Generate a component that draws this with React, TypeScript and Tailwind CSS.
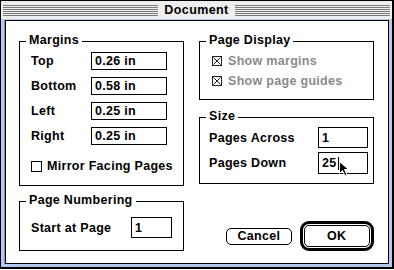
import React from 'react';

const font = { fontFamily: '"Liberation Sans", Arial, sans-serif' };

const stripes =
  'bg-[repeating-linear-gradient(to_bottom,#7a7a7a_0px,#7a7a7a_1px,#eeeeee_1px,#eeeeee_2px)]';

function GroupBox({
  title,
  className,
  children,
}: {
  title: string;
  className: string;
  children: React.ReactNode;
}) {
  return (
    <div className={`relative border border-black ${className}`}>
      <span className="absolute left-[6px] -top-[9px] bg-white px-[3px] text-[12.5px] font-bold leading-[14px] tracking-[0.3px] text-black">
        {title}
      </span>
      {children}
    </div>
  );
}

function Field({ value, className, caret }: { value: string; className: string; caret?: boolean }) {
  return (
    <div className={`flex items-center border border-black pl-[3px] text-[12.5px] font-bold leading-[14px] ${className}`}>
      <span>{value}</span>
      {caret && <span className="ml-[1px] h-[13px] w-[1px] bg-black" />}
    </div>
  );
}

function XBox() {
  return (
    <svg width="10" height="10" viewBox="0 0 10 10" className="shrink-0">
      <rect x="0.5" y="0.5" width="9" height="9" fill="white" stroke="#222" />
      <path d="M1.5 1.5 L8.5 8.5 M8.5 1.5 L1.5 8.5" stroke="#222" strokeWidth="1" />
    </svg>
  );
}

function Cursor() {
  return (
    <svg width="11" height="16" viewBox="0 0 11 16" className="absolute left-[21px] top-[9px]">
      <path
        d="M0.5 0.5 L0.5 12.5 L3.5 9.5 L6 15 L8 14 L5.5 8.5 L9.5 8.5 Z"
        fill="black"
        stroke="white"
        strokeWidth="1"
      />
    </svg>
  );
}

export default function App() {
  return (
    <div className="h-[270px] w-[394px] bg-white" style={font}>
      <div className="flex h-[269px] w-[394px] flex-col border-b-2 border-l border-r-2 border-t border-black bg-[#b4c8ee]">
        {/* title bar */}
        <div className="flex h-[18px] items-center bg-[#eeeeee] px-[2px]">
          <div className={`h-[11px] flex-1 ${stripes}`} />
          <div className="px-[6px] text-[12.5px] font-bold leading-[14px] tracking-[0.4px] text-black">
            Document
          </div>
          <div className={`h-[11px] flex-1 ${stripes}`} />
        </div>

        {/* content */}
        <div className="mb-[3px] ml-[4px] mr-[3px] mt-[1px] flex flex-1 gap-[15px] border border-black bg-white pl-[13px] pt-[20px] text-[12.5px] font-bold leading-[14px] tracking-[0.3px] text-black shadow-[-1px_0_0_#7f96c8]">
          {/* left column */}
          <div className="flex w-[165px] flex-col gap-[15px]">
            <GroupBox title="Margins" className="h-[145px]">
              <div className="flex flex-col gap-[7px] pl-[11px] pt-[10px]">
                {[
                  ['Top', '0.26 in'],
                  ['Bottom', '0.58 in'],
                  ['Left', '0.25 in'],
                  ['Right', '0.25 in'],
                ].map(([label, value]) => (
                  <div key={label} className="flex items-center">
                    <span className="w-[60px]">{label}</span>
                    <Field value={value} className="h-[18px] w-[76px]" />
                  </div>
                ))}
                <div className="mt-[7px] flex items-center gap-[5px]">
                  <span className="h-[11px] w-[11px] border border-black" />
                  <span>Mirror Facing Pages</span>
                </div>
              </div>
            </GroupBox>
            <GroupBox title="Page Numbering" className="h-[50px]">
              <div className="flex items-center pl-[11px] pt-[15px]">
                <span className="w-[100px]">Start at Page</span>
                <Field value="1" className="h-[21px] w-[41px]" />
              </div>
            </GroupBox>
          </div>

          {/* right column */}
          <div className="flex w-[175px] flex-col">
            <GroupBox title="Page Display" className="h-[59px]">
              <div className="flex flex-col gap-[6px] pl-[12px] pt-[12px] text-[#8a8a8a]">
                <div className="flex items-center gap-[6px]">
                  <XBox />
                  <span>Show margins</span>
                </div>
                <div className="flex items-center gap-[6px]">
                  <XBox />
                  <span>Show page guides</span>
                </div>
              </div>
            </GroupBox>
            <GroupBox title="Size" className="mt-[17px] h-[67px]">
              <div className="flex flex-col gap-[4px] pl-[9px] pt-[9px]">
                <div className="flex items-center">
                  <span className="w-[109px]">Pages Across</span>
                  <Field value="1" className="h-[21px] w-[50px]" />
                </div>
                <div className="flex items-center">
                  <span className="w-[109px]">Pages Down</span>
                  <div className="relative">
                    <Field value="25" caret className="h-[22px] w-[50px]" />
                    <Cursor />
                  </div>
                </div>
              </div>
            </GroupBox>

            {/* buttons */}
            <div className="mt-[37px] flex items-center">
              <button className="ml-[27px] flex h-[17px] w-[68px] items-center justify-center rounded-[5px] border border-black bg-white text-[12.5px] font-bold leading-[14px] tracking-[0.3px]">
                Cancel
              </button>
              <div className="ml-[8px] flex h-[30px] w-[77px] items-center justify-center rounded-[9px] border-[3px] border-black bg-white p-[1px]">
                <button className="flex h-full w-full items-center justify-center rounded-[5px] border border-black bg-white text-[12.5px] font-bold leading-[14px]">
                  OK
                </button>
              </div>
            </div>
          </div>
        </div>
      </div>
    </div>
  );
}
